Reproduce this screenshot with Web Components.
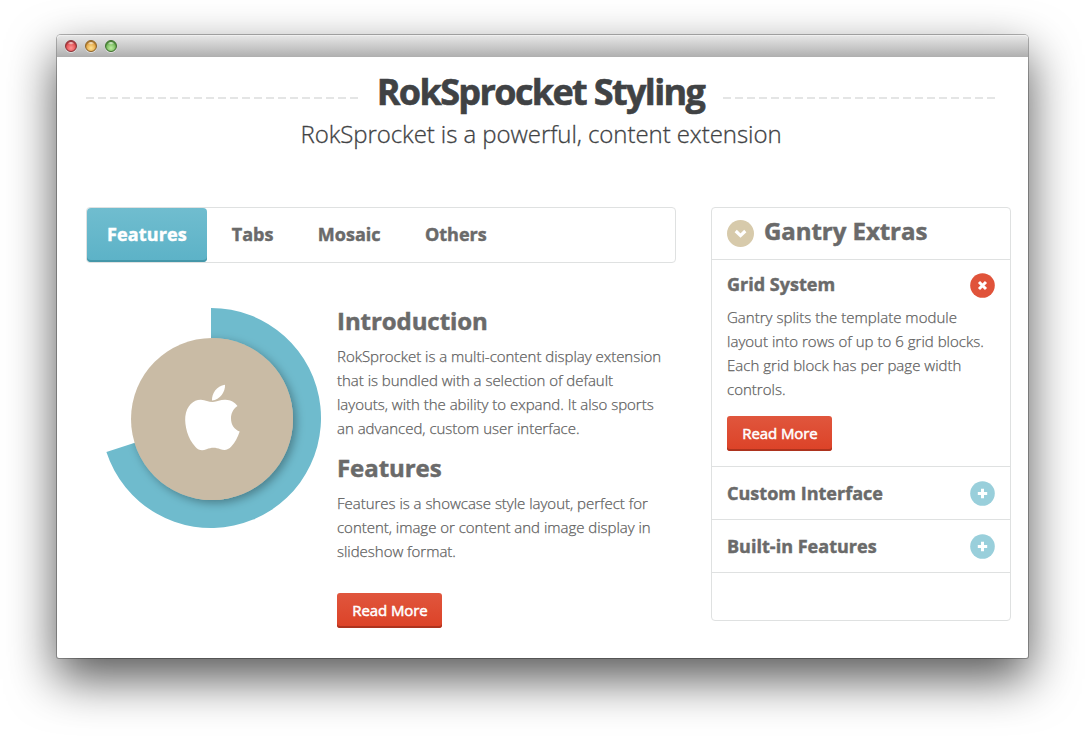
<!DOCTYPE html>
<html lang="en">
<head>
<meta charset="utf-8">
<title>RokSprocket Styling</title>
<style>
html,body{margin:0;height:100%;background:#fff;overflow:hidden}
body{font-family:"Open Sans","Noto Sans",sans-serif;color:#6a6a6a;padding:35px 57px 79px;box-sizing:border-box}
</style>
</head>
<body>
<app-window>
  <page-heading>RokSprocket Styling<span slot="sub">RokSprocket is a powerful, content extension</span></page-heading>
  <page-columns>
    <tab-panel slot="main">
      <tab-item slot="tab" active>Features</tab-item>
      <tab-item slot="tab">Tabs</tab-item>
      <tab-item slot="tab">Mosaic</tab-item>
      <tab-item slot="tab">Others</tab-item>
      <progress-dial slot="art"></progress-dial>
      <text-block><span slot="title">Introduction</span>RokSprocket is a multi-content display extension<br>that is bundled with a selection of default<br>layouts, with the ability to expand. It also sports<br>an advanced, custom user interface.</text-block>
      <text-block><span slot="title">Features</span>Features is a showcase style layout, perfect for<br>content, image or content and image display in<br>slideshow format.</text-block>
      <action-button class="more">Read More</action-button>
    </tab-panel>
    <extras-card slot="side">
      <span slot="title">Gantry Extras</span>
      <accordion-item open><span slot="title">Grid System</span>Gantry splits the template module<br>layout into rows of up to 6 grid blocks.<br>Each grid block has per page width<br>controls.<action-button slot="action">Read More</action-button></accordion-item>
      <accordion-item><span slot="title">Custom Interface</span></accordion-item>
      <accordion-item><span slot="title">Built-in Features</span></accordion-item>
    </extras-card>
  </page-columns>
</app-window>
<script>
const define = (name, html) => customElements.define(name, class extends HTMLElement {
  constructor() {
    super();
    const t = document.createElement('template');
    t.innerHTML = html;
    this.attachShadow({ mode: 'open' }).append(t.content.cloneNode(true));
  }
});

define('app-window', `
<style>
:host{display:flex;flex-direction:column;height:623px;background:#fff;border-radius:4px 4px 2px 2px;
  box-shadow:0 0 0 1px rgba(0,0,0,.28),0 20px 48px 1px rgba(0,0,0,.66)}
.bar{height:22px;flex:none;box-sizing:border-box;display:flex;gap:8px;align-items:center;padding-left:8px;
  background:linear-gradient(#e8e8e8,#b2b2b2);border-radius:4px 4px 0 0;border-bottom:1px solid #b0b0b0;box-shadow:inset 0 1px #f0f0f0}
i{width:12px;height:12px;border-radius:50%;box-sizing:border-box;border:1px solid var(--e);margin-top:1px;
  background:radial-gradient(ellipse 4px 2px at 50% 18%,rgba(255,255,255,.85),transparent),radial-gradient(circle at 50% 70%,var(--l),var(--c) 75%);
  box-shadow:inset 0 1px 1px var(--e),0 1px rgba(255,255,255,.5)}
.r{--c:#dc3f43;--l:#ff9292;--e:#8b3035}.y{--c:#dd9835;--l:#ffe291;--e:#8f6425}.g{--c:#63ac4b;--l:#bdeda0;--e:#3d702c}
.body{padding:0 0 0 29px;display:flex;flex-direction:column}
</style>
<div class="bar"><i class="r"></i><i class="y"></i><i class="g"></i></div>
<div class="body"><slot></slot></div>`);

define('page-heading', `
<style>
:host{display:block;width:911px;height:150px;color:#404244;text-align:center}
.row{display:flex;align-items:center;padding-top:11px;height:48px}
h1{flex:none;width:361px;padding-right:2px;margin:0;font-size:36px;line-height:48px;font-weight:700;letter-spacing:-1.63px;-webkit-text-stroke:.6px #404244}
b{flex:1;height:2px;margin-top:11px;background:repeating-linear-gradient(90deg,#e4e5e5 0 8px,transparent 8px 12px)}
p{margin:0 1px 0 0;font-size:24px;line-height:36px;font-weight:300;letter-spacing:-.07px;-webkit-text-stroke:.3px #404244}
</style>
<div class="row"><b></b><h1><slot></slot></h1><b></b></div>
<p><slot name="sub"></slot></p>`);

define('page-columns', `
<style>:host{display:grid;grid-template-columns:590px 300px;gap:35px;align-items:start}</style>
<slot name="main"></slot><slot name="side"></slot>`);

define('tab-panel', `
<style>
:host{display:block}
nav{display:flex;height:56px;box-sizing:border-box;border:1px solid #dfe1e1;border-radius:4px}
.content{display:grid;grid-template-columns:235px 1fr;gap:16px;padding-top:40px}
.art{padding-top:5px}
::slotted(.more){margin-top:30px}
</style>
<nav><slot name="tab"></slot></nav>
<div class="content"><div class="art"><slot name="art"></slot></div><div><slot></slot></div></div>`);

define('tab-item', `
<style>
:host{display:block;padding:0 20px;margin-right:4.400px;font-size:18px;line-height:52px;font-weight:700;letter-spacing:0;-webkit-text-stroke:.45px;color:#6a6a6a}
:host([active]){margin:0 5px 0 0;padding:0 20px;letter-spacing:.13px;color:#fff;border-radius:4px;height:54px;
  background:linear-gradient(#70bdcf,#5cb2c7);box-shadow:inset 0 -2px #4597a9}
</style><slot></slot>`);

define('progress-dial', `
<style>:host{display:block;height:225px}svg{display:block;overflow:visible}</style>
<svg width="235" height="225" viewBox="0 0 235 225">
  <defs><filter id="s" x="-20%" y="-20%" width="150%" height="150%"><feDropShadow dx="3" dy="3" stdDeviation="5" flood-color="#000" flood-opacity=".33"/></filter>
  <clipPath id="k"><path d="M125 0A110 110 0 1 1 20.4 144L125 110Z"/></clipPath></defs>
  <path d="M125 0A110 110 0 1 1 20.4 144L125 110Z" fill="#6fbbcd"/>
  <g clip-path="url(#k)"><circle cx="126" cy="111" r="81" fill="#c9bba5" filter="url(#s)"/></g>
  <circle cx="126" cy="111" r="81" fill="#c9bba5"/>
  <path fill="#fff" d="M126 92.5C125.5 86 130.500 77.500 139 76.700C139.500 83.500 134 92 126 92.500Z"/>
  <path fill="#fff" d="M151.500 98C146.500 101.500 145 106 145 110.500C145 117 148.500 121.500 153.700 123.500C151.700 129.500 149 134.500 145.500 138.300C142 142.500 138.200 142.500 134.500 141.300C129.500 139.300 125.500 139.300 120.500 141.300C116 143 112.500 142.300 109.500 139C101.500 130.500 98.500 117.500 99.300 108.500C100.500 97.500 108 91.500 115 91.800C119.500 92 123 94.200 127 94C131 93.800 134.500 91.500 139.500 91.700C144.500 92 149 94 151.500 98Z"/>
</svg>`);

define('text-block', `
<style>
:host{display:block;margin-bottom:10px}
h2{margin:0 0 5px;font-size:24px;line-height:36px;font-weight:700;letter-spacing:-.07px;-webkit-text-stroke:.5px}
p{margin:0;font-size:15px;line-height:24px;font-weight:300;letter-spacing:-.02px;color:#606060;-webkit-text-stroke:.25px}
</style>
<h2><slot name="title"></slot></h2><p><slot></slot></p>`);

define('action-button', `
<style>
:host{display:block;width:105px;height:35px;box-sizing:border-box;text-align:center;border-radius:3px;color:#fff;
  font-size:15px;line-height:34px;font-weight:400;letter-spacing:-.1px;text-indent:1px;-webkit-text-stroke:.5px #fff;
  background:linear-gradient(#e0563d,#dc4227);box-shadow:inset 0 -2px #ad331e}
</style><slot></slot>`);

define('extras-card', `
<style>
:host{display:block;height:414px;box-sizing:border-box;border:1px solid #dfe1e1;border-radius:4px}
header{display:flex;align-items:center;gap:10px;padding:0 15px;height:51px;border-bottom:1px solid #dfe1e1}
h2{margin:-6px 0 0;font-size:24px;line-height:36px;font-weight:700;letter-spacing:-.05px;-webkit-text-stroke:.5px}
</style>
<header><svg width="27" height="27" viewBox="0 0 27 27"><circle cx="13.500" cy="13.500" r="13.500" fill="#d7caab"/><path d="M8.700 11l4.800 4.600 4.800-4.600" fill="none" stroke="#fff" stroke-width="3.200"/></svg>
<h2><slot name="title"></slot></h2></header>
<slot></slot>`);

define('accordion-item', `
<style>
:host{display:block;border-bottom:1px solid #dfe1e1;padding:0 15px}
.head{display:flex;justify-content:space-between;align-items:center;height:52px}
h3{margin:0;font-size:18px;line-height:24px;font-weight:700;letter-spacing:.02px;-webkit-text-stroke:.45px}
.body,.x{display:none}
svg{margin-top:1px}
:host([open]) .body{display:block;padding-bottom:15px}
:host([open]) .head{box-sizing:border-box;height:45px;padding-top:4px}
:host([open]) h3{margin-top:-2px}
:host([open]) .x{display:block;margin-top:1px}:host([open]) .p{display:none}
p{margin:0 0 15px;font-size:15px;line-height:24px;font-weight:300;letter-spacing:.02px;color:#606060;-webkit-text-stroke:.25px}
</style>
<div class="head"><h3><slot name="title"></slot></h3>
<svg class="p" width="25" height="25" viewBox="0 0 25 25"><circle cx="12.500" cy="12.500" r="12.300" fill="#99cfdb"/><path d="M12.500 7.800v9.400M7.800 12.500h9.400" stroke="#fff" stroke-width="3"/></svg>
<svg class="x" width="25" height="25" viewBox="0 0 25 25"><circle cx="12.500" cy="12.500" r="12.300" fill="#e0533a"/><path d="M9 9l7 7M16 9l-7 7" stroke="#fff" stroke-width="3"/></svg></div>
<div class="body"><p><slot></slot></p><slot name="action"></slot></div>`);
</script>
</body>
</html>
